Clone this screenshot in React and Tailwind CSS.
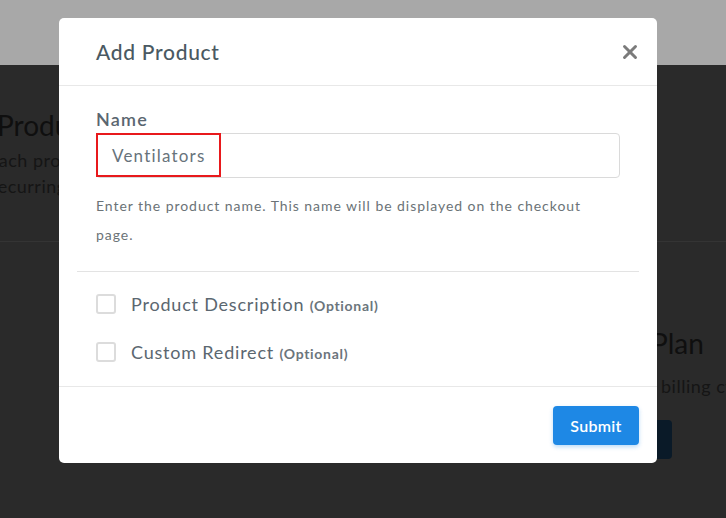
import { X } from "lucide-react";

const FONT = { fontFamily: "Lato, 'Open Sans', sans-serif" };

function Checkbox({ label }) {
  return (
    <label className="flex items-center gap-[15px] h-[20px]">
      <span className="w-[20px] h-[20px] border-2 border-[#dcdcdc] rounded-[3px] bg-white" />
      <span className="text-[18px] tracking-[0.8px] text-[#5b6770] leading-none">
        {label} <span className="text-[14px] tracking-[0.7px] font-bold text-[#6b757c]">(Optional)</span>
      </span>
    </label>
  );
}

export default function App() {
  return (
    <div className="relative w-[726px] h-[518px] overflow-hidden bg-[#2a2a2a]" style={FONT}>
      {/* page behind the overlay */}
      <div className="h-[65px] bg-[#a8a8a8]" />
      <div className="flex h-[453px]">
        <div className="flex-1 flex flex-col">
          <div className="h-[176px] pt-[43px] ml-[-3px]">
            <div className="text-[28px] leading-[34px] text-[#0f0f0f]">Products</div>
            <div className="ml-[-9px] mt-[5px] text-[18px] tracking-[0.5px] leading-[26px] text-[#151515]">Each product you add</div>
            <div className="ml-[-6px] text-[18px] tracking-[0.5px] leading-[26px] text-[#151515]">recurring payments</div>
          </div>
          <div className="h-px bg-[#343434]" />
        </div>
        <div className="w-[71px] flex flex-col">
          <div className="h-[176px]" />
          <div className="h-px bg-[#343434]" />
          <div className="pt-[84px] text-[28px] leading-[34px] text-[#0f0f0f] ml-[-4px]">Plan</div>
          <div className="mt-[13px] ml-[6px] text-[18px] tracking-[0.5px] leading-[26px] text-[#151515] whitespace-nowrap">billing cycle</div>
          <div className="mt-[21px] ml-[-2px] w-[19px] h-[39px] bg-[#0a1a28] rounded-r-[4px]" />
        </div>
      </div>

      {/* modal */}
      <div className="absolute left-[59px] top-[18px] w-[598px] h-[445px] bg-white rounded-[5px] flex flex-col">
        <div className="h-[68px] flex items-center justify-between pl-[37px] pr-[16px] border-b border-[#e8e8e8]">
          <h2 className="text-[21px] tracking-[0.7px] text-[#4a5962] font-medium">Add Product</h2>
          <X size={22} strokeWidth={3.2} className="text-[#7b7b7b]" />
        </div>
        <div className="px-[37px] pt-[23px]">
          <div className="text-[18px] tracking-[1.2px] leading-[20px] font-semibold text-[#5a6670]">Name</div>
          <div className="relative mt-[4px] h-[45px] border border-[#dadada] rounded-[4px] flex items-center pl-[15px]">
            <span className="text-[17px] tracking-[1.2px] text-[#67737b]">Ventilators</span>
            <div className="absolute left-[-1px] top-[-1px] w-[125px] h-[44px] border-2 border-[#e8191c]" />
          </div>
          <p className="mt-[13px] text-[14px] tracking-[0.95px] leading-[29px] text-[#6b7377] whitespace-nowrap">
            Enter the product name. This name will be displayed on the checkout
            <br />
            page.
          </p>
        </div>
        <div className="mx-[18px] mt-[22px] h-px bg-[#e3e3e3]" />
        <div className="px-[37px] pt-[22px] flex flex-col gap-[28px]">
          <Checkbox label="Product Description" />
          <Checkbox label="Custom Redirect" />
        </div>
        <div className="mt-[24px] border-t border-[#e8e8e8] flex justify-end pr-[18px] pt-[19px]">
          <button className="w-[86px] h-[39px] bg-[#1e88e5] text-white text-[16px] tracking-[0.3px] font-semibold rounded-[4px] shadow-[0_2px_4px_rgba(30,136,229,0.3)]">
            Submit
          </button>
        </div>
      </div>
    </div>
  );
}
